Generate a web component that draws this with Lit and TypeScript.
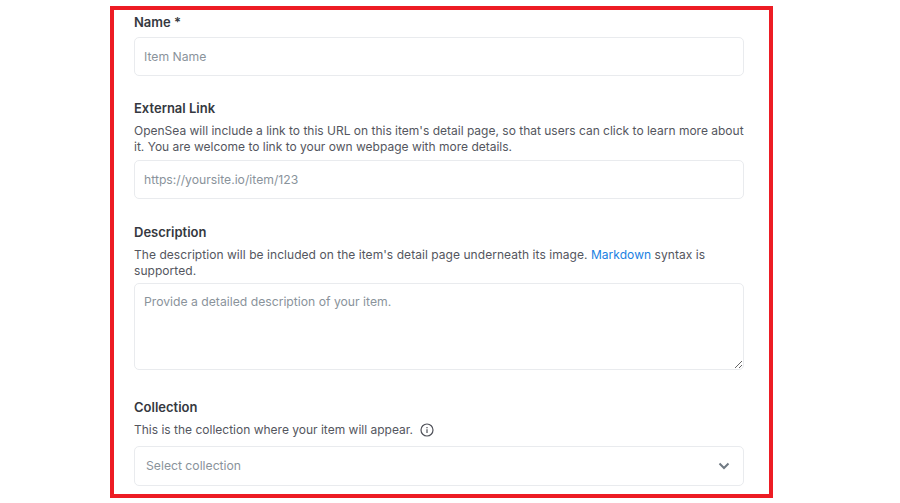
import { LitElement, html, css } from "lit";
import { customElement } from "lit/decorators.js";

@customElement("app-root")
export class AppRoot extends LitElement {
  static styles = css`
    :host {
      display: block;
      width: 900px;
      height: 503px;
      overflow: hidden;
      background: #fff;
      font-family: Inter, "Open Sans", "Liberation Sans", sans-serif;
      color: #353840;
      padding: 6px 0 0 110px;
      box-sizing: border-box;
    }
    .frame {
      box-sizing: border-box;
      width: 663px;
      height: 492px;
      border: 4px solid #ed1c24;
      padding: 1px 25px 0 20px;
      display: flex;
      flex-direction: column;
    }
    .field { display: flex; flex-direction: column; }
    .f1 { height: 86px; }
    .f2 { height: 124px; }
    .f3 { height: 175px; }
    label { font-size: 13px; font-weight: 600; line-height: 22px; margin-bottom: 4px; color: #353840; }
    .help {
      font-size: 12px;
      line-height: 16px;
      color: #54565e;
      margin: 0 0 5px;
    }
    .help.tight { margin-bottom: 4px; letter-spacing: 0.05px; }
    .help a { color: #2081e2; text-decoration: none; }
    .help.row { display: flex; align-items: center; gap: 7px; margin: 0 0 8px; }
    .control {
      box-sizing: border-box;
      width: 100%;
      height: 39px;
      border: 1px solid #e9ebee;
      border-radius: 5px;
      padding: 0 9px;
      font: 400 12.2px Inter, "Open Sans", "Liberation Sans", sans-serif;
      color: #353840;
      outline: none;
      background: #fff;
      display: block;
    }
    .control::placeholder { color: #8a939b; opacity: 1; }
    textarea.control { height: 87px; padding: 10px 9px; resize: vertical; }
    .select {
      height: 40px;
      display: flex;
      align-items: center;
      justify-content: space-between;
      padding: 0 13px 0 11px;
      color: #8a939b;
    }
    .select span { margin-bottom: 1px; }
    svg { display: block; flex: none; }
  `;

  render() {
    return html`
      <form class="frame">
        <div class="field f1">
          <label for="n">Name *</label>
          <input id="n" class="control" placeholder="Item Name" />
        </div>
        <div class="field f2">
          <label for="l">External Link</label>
          <p class="help">OpenSea will include a link to this URL on this item's detail page, so that users can click to learn more about it. You are welcome to link to your own webpage with more details.</p>
          <input id="l" class="control" placeholder="https://yoursite.io/item/123" />
        </div>
        <div class="field f3">
          <label for="d">Description</label>
          <p class="help tight">The description will be included on the item's detail page underneath its image. <a href="#">Markdown</a> syntax is <span>supported.</span></p>
          <textarea id="d" class="control" placeholder="Provide a detailed description of your item."></textarea>
        </div>
        <div class="field">
          <label>Collection</label>
          <p class="help row">
            <span>This is the collection where your item will appear.</span>
            <svg width="14" height="14" viewBox="0 0 14 14" fill="none" stroke="#4f5159" stroke-width="1.2">
              <circle cx="7" cy="7" r="6"></circle>
              <path d="M7 6.3v3.6M7 4v1.2"></path>
            </svg>
          </p>
          <div class="control select">
            <span>Select collection</span>
            <svg width="12" height="8" viewBox="0 0 12 8" fill="none" stroke="#707a83" stroke-width="2">
              <path d="M1.5 1.5 6 6l4.5-4.5"></path>
            </svg>
          </div>
        </div>
      </form>
    `;
  }
}
